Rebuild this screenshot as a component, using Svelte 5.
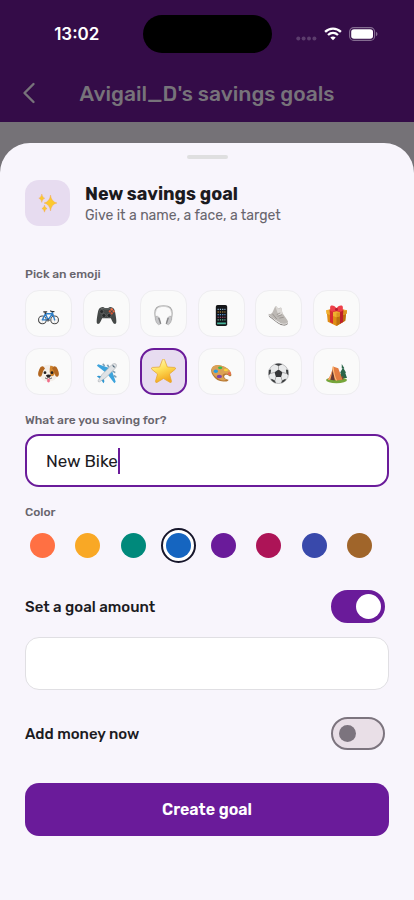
<script>
    const emojis = [
        "bike", "gamepad", "headphones", "phone", "shoe", "gift",
        "dog", "plane", "star", "palette", "football", "tent",
    ];
    const colors = [
        { name: "Orange", value: "#ff7043" },
        { name: "Amber", value: "#f9a825" },
        { name: "Teal", value: "#00897b" },
        { name: "Blue", value: "#1565c0" },
        { name: "Purple", value: "#6a1b9a" },
        { name: "Pink", value: "#ad1457" },
        { name: "Indigo", value: "#3949ab" },
        { name: "Brown", value: "#a0652a" },
    ];

    let emoji = "star";
    let color = "#1565c0";
    let goalName = "New Bike";
    let amount = "";
    let hasGoal = true;
    let addMoney = false;
</script>

<div class="screen">
    <header>
        <div class="status">
            <span class="time">13:02</span>
            <span class="island"></span>
            <span class="signals">
                <svg width="21" height="5" viewBox="0 0 21 5" fill="#5c3d6d">
                    <circle cx="2.3" cy="2.5" r="2" />
                    <circle cx="7.6" cy="2.5" r="2" />
                    <circle cx="13" cy="2.5" r="2" />
                    <circle cx="18.4" cy="2.5" r="2" />
                </svg>
                <svg width="18" height="14" viewBox="0 0 18 14" fill="none" stroke="#fff" stroke-width="2.3">
                    <path d="M1.1 4.9C5.6.6 12.4.6 16.9 4.9" />
                    <path d="M4 8c2.9-2.7 7.1-2.7 10 0" />
                    <path d="M6.3 10.5c1.6-1.4 3.8-1.4 5.4 0L9 13.3z" fill="#fff" stroke="none" />
                </svg>
                <svg width="29" height="14" viewBox="0 0 29 14">
                    <rect x=".6" y=".6" width="25" height="12.8" rx="4.2" fill="none" stroke="#846d91" stroke-width="1.1" />
                    <rect x="2.2" y="2.2" width="21.8" height="9.6" rx="2.8" fill="#fff" />
                    <path d="M27 4.8c2 .8 2 3.6 0 4.4z" fill="#846d91" />
                </svg>
            </span>
        </div>
        <div class="nav">
            <button class="back" aria-label="Back">
                <svg width="14" height="22" viewBox="0 0 14 22" fill="none" stroke="#77737a" stroke-width="2.4" stroke-linecap="round" stroke-linejoin="round">
                    <path d="M11.5 2 2.5 11l9 9" />
                </svg>
            </button>
            <h1>Avigail_D's savings goals</h1>
        </div>
    </header>

    <main class="sheet">
        <div class="handle"></div>

        <div class="intro">
            <div class="badge">
                <svg width="20" height="20" viewBox="0 0 20 20" fill="#fcc92f" stroke="#f2a65a" stroke-width=".4">
                    <path d="M12.5 2q.9 6.900 6.500 8-5.600 1.100-6.500 8-.9-6.900-6.500-8 5.600-1.100 6.500-8z" />
                    <path d="M3.800 1q.5 3.500 3 4.200-2.500.7-3 4.200-.5-3.500-3-4.200 2.500-.7 3-4.200z" />
                    <path d="M6.500 12q.4 3 2.600 3.600-2.200.6-2.600 3.600-.4-3-2.600-3.600 2.200-.6 2.600-3.600z" />
                </svg>
            </div>
            <div class="heading">
                <h2>New savings goal</h2>
                <p>Give it a name, a face, a target</p>
            </div>
        </div>

        <h3>Pick an emoji</h3>
        <div class="emojis">
            {#each emojis as name}
                <button
                    class="tile"
                    class:selected={emoji === name}
                    aria-label={name}
                    aria-pressed={emoji === name}
                    on:click={() => (emoji = name)}
                >
                    <svg viewBox="0 0 24 24">
                        {#if name === "bike"}
                            <g fill="none" stroke-linecap="round" stroke-linejoin="round">
                                <circle cx="5" cy="17" r="4.400" stroke="#444" stroke-width="1.200" />
                                <circle cx="19" cy="17" r="4.400" stroke="#444" stroke-width="1.200" />
                                <path d="M5 13v8M1 17h8M19 13v8M15 17h8" stroke="#bbb" stroke-width=".4" />
                                <path d="M5 17 8.500 10h8L11.500 17H5M8.500 10l3 7M19 17 16 7.500" stroke="#2f7fc8" stroke-width="1.600" />
                                <path d="M6.500 7.800h3.500M8.500 10l-.5-2.200M16 7.500l-1.700-.7M16 7.500h2.300" stroke="#333" stroke-width="1.300" />
                                <circle cx="11.500" cy="17.300" r="1.200" stroke="#444" />
                            </g>
                        {:else if name === "gamepad"}
                            <path d="M5 3q3-1.500 5 .3h4Q16 1.500 19 3q2 .5 3 6 1.500 8 1.200 11-.3 2-2.200 1.500-1.500-.5-4-6.500H7Q4.500 21 3 21.500 1.100 22 .8 20 .5 17 2 9 3 3.500 5 3z" fill="#444847" />
                            <path d="M5.500 4.200q3-1 4.500.3h4q1.500-1.300 4.500-.3" fill="none" stroke="#6c706f" />
                            <circle cx="6.500" cy="7.500" r="2.300" fill="#292c2c" stroke="#777" stroke-width=".6" />
                            <circle cx="9" cy="12" r="2.300" fill="#252828" stroke="#777" stroke-width=".6" />
                            <circle cx="15" cy="12" r="2.300" fill="#252828" stroke="#777" stroke-width=".6" />
                            <circle cx="18" cy="5" r="1.400" fill="#ff7043" />
                            <circle cx="15.800" cy="7.300" r="1.300" fill="#db5a3b" />
                            <circle cx="20.200" cy="7.300" r="1.300" fill="#ef6c42" />
                            <circle cx="18" cy="9.600" r="1.300" fill="#da5633" />
                        {:else if name === "headphones"}
                            <path d="M3.500 17C-.5 1.500 7 1.200 12 1.200S24.500 1.500 20.500 17" fill="none" stroke="#aaa" stroke-width="1.800" />
                            <path d="M3.500 16.500C.5 2.500 7.500 1.500 12 1.500S23.500 2.500 20.500 16.500" fill="none" stroke="#eee" stroke-width=".7" />
                            <path d="M3 13q2.500-1 4.500 2l1.500 6.500-2.500 1.200Q3.300 21 2.500 16zM21 13q-2.500-1-4.500 2L15 21.500l2.500 1.200q3.200-1.700 4-6.700z" fill="#c6c6c8" stroke="#999" stroke-width=".5" />
                            <path d="m6.500 14.500 2.300 7M17.500 14.500l-2.300 7" stroke="#858587" stroke-width="1.400" />
                        {:else if name === "phone"}
                            <rect x="5.500" y="0" width="13" height="24" rx="2" fill="#151719" />
                            <rect x="7" y="3" width="10" height="18" fill="#101318" />
                            <g stroke-width="1.400" stroke-dasharray="1.400 1.200">
                                <path d="M7.500 5h9" stroke="#91b8d3" />
                                <path d="M7.500 8h9" stroke="#dda23d" />
                                <path d="M7.500 11h9" stroke="#5d99d7" />
                                <path d="M7.500 14h9" stroke="#c35979" />
                                <path d="M7.500 17h9" stroke="#6ebaa0" />
                            </g>
                            <path d="M7 21h10" stroke="#47b59b" stroke-width="2" />
                        {:else if name === "shoe"}
                            <path d="M1 10q2 1.500 4-1.500L8 2q1.500-1.500 2.500.5.500 2 2.500 1 2-1.500 2.500.5.500 4 1.500 6l5 7q1.500 2 .5 4.500-1 1.500-4 1.500-3-1-6.500-4L1.500 13q-1.300-1.500-.5-3z" fill="#bdb9b5" />
                            <path d="M8.500 2q1-1 2 .5.500 2 2.500 1.500 2-1.500 2.500.5l1.200 6-4.700 1.500z" fill="#dcd9d6" />
                            <path d="M.8 11q5 4 8 7 5 4 9 4.500 4 0 5-2-.3 2.500-4 3-3.500.3-8-3L1.500 13.500z" fill="#77726f" />
                            <path d="M1 11.500q5 4 8 6.500 5 4 9 4 3 0 4.500-1.500" fill="none" stroke="#efeeec" stroke-width=".8" />
                            <path d="m10 11 4-2m-3 4 5-2m-3 4 5-1M5 10l5 6" fill="none" stroke="#918c89" stroke-width=".9" />
                        {:else if name === "gift"}
                            <path d="m1 9 11 3 11-3-1 9-10 6-10-5z" fill="#df8d15" />
                            <path d="m12 12 11-3-1 9-10 6z" fill="#bd7010" />
                            <path d="m0 6 12-3 12 3-.5 4L12 14 .5 10z" fill="#efb02f" />
                            <path d="m12 9 12-3-.5 4L12 14z" fill="#dc9420" />
                            <path d="m4 5.500 4 2v14l-3.500-2V10z" fill="#d72c32" />
                            <path d="m20 5.500-4 2v14l3.500-2V10z" fill="#bd202b" />
                            <path d="m4 5.500 8-2 8 2-4 2.500-4-1-4 1z" fill="#d72c32" />
                            <path d="M12 6Q6 9 5 6 4 1 6 .5 10 0 12 4q2-4 6-3.500 2 .5 1 5.500-1 3-7 0z" fill="#ed3f49" />
                            <circle cx="12" cy="5" r="1.700" fill="#b81c2d" />
                        {:else if name === "dog"}
                            <path d="M5 4q7-4 14 0l3 9q-1 8-10 8T2 13z" fill="#f3eee9" />
                            <path d="M14 3q5 0 6 6-1 6-4.500 6Q12 12 14 3z" fill="#cf842e" />
                            <path d="M6 4Q3 3 1.500 7-1 13 1 15q3 2 4-3 .5-3 3-6zM18 4q3-1 4.500 3 2.500 6 .5 8-3 2-4-3-.5-3-3-6z" fill="#b26620" />
                            <circle cx="8" cy="11" r="1.600" fill="#24201f" />
                            <circle cx="16" cy="11" r="1.600" fill="#24201f" />
                            <path d="M9 14q3-2 6 0l-1.500 2.500h-3z" fill="#252225" />
                            <path d="M8 17q2 2 4-.5 2 2.500 4 .5" fill="none" stroke="#4e4543" />
                            <path d="M10.500 18h3v3q-1.500 2.500-3 0z" fill="#f16c88" />
                        {:else if name === "plane"}
                            <path d="m1 3 1.500-1.500L16 6l2 2-4 5zM21 23l1.500-1.500L18 8l-2-2-5 4z" fill="#3ca3dc" />
                            <path d="m1 15.500 1.500-1 5 .5 1.500 1.500.5 5-1 1.500-3-4.500z" fill="#2c96d2" />
                            <path d="M22.800 1.200q1.500 1.500-.5 4.500L11 17l-7 4.500q-2 .5-1.500-1.500L7 13 18.300 1.700q3-2 4.500-.5z" fill="#dfe2e5" stroke="#9ba1a7" stroke-width=".6" />
                            <path d="m7 1 2-.5 1.500 3-1.500.5zM12 2.200l2-.5 1.500 3-1.500.500zM23 17l.5-2-3-1.500-.5 1.500zM21.800 12l.5-2-3-1.500-.5 1.500z" fill="#7f9eb3" />
                            <path d="m19 2.800 2.300 2.300" stroke="#405b6e" stroke-width="1.200" />
                        {:else if name === "star"}
                            <defs>
                                <linearGradient id="gold" x2=".4" y2="1">
                                    <stop stop-color="#fffad0" />
                                    <stop offset=".5" stop-color="#ffe15b" />
                                    <stop offset="1" stop-color="#f3a71e" />
                                </linearGradient>
                            </defs>
                            <path d="M12 0q.8 0 1.200 1.200l2.500 6.500 7 .4q1.700.5.500 1.800l-5.500 4.500 2 7q0 1.800-1.700 1L12 18.700l-6 3.700q-1.700.8-1.700-1l2-7L.8 9.900Q-.4 8.600 1.300 8.100l7-.4 2.500-6.500Q11.200 0 12 0z" fill="url(#gold)" stroke="#e5a42d" stroke-width=".7" />
                        {:else if name === "palette"}
                            <path d="M1 6Q4 1 12 3q8 2 11 9 1 4-2 3-4-3-6 0 0 3 5 4 0 2-4 2Q7 22 2 14-1 9 1 6z" fill="#b77832" />
                            <path d="M1 5.500Q4 1 12 3q8 2 11 8 0 3-2.500 2.500-4-3-7 0-1 3 4 5.500-3 2-8-.5-10-5-8.500-13z" fill="#dba156" />
                            <ellipse cx="5.500" cy="9.500" rx="2.500" ry="2" fill="#2a9fe0" />
                            <ellipse cx="10.500" cy="5.500" rx="2.500" ry="1.500" fill="#3cb94b" />
                            <ellipse cx="17" cy="8" rx="2.400" ry="1.500" fill="#f8d439" />
                            <ellipse cx="21" cy="12" rx="1.800" ry="1.500" fill="#ed6555" />
                            <ellipse cx="9.500" cy="15.500" rx="3" ry="2" fill="#7e42ac" />
                        {:else if name === "football"}
                            <circle cx="12" cy="12" r="11.500" fill="#e9eaeb" stroke="#8a8b8d" stroke-width=".6" />
                            <path d="m12 7.500 4.500 3.200L15 16H9l-1.500-5.300z" fill="#353638" />
                            <path d="m7.500 1.400 4.500 2 4.500-2Q12-.5 7.500 1.400zM1 8l-.2 6 2.200-2 .5-4.500zM23 8l.2 6-2.200-2-.5-4.500zM3.500 19.500q2.500 3 5.500 3.600L8 20l-4-2zM20.500 19.500q-2.500 3-5.500 3.600l1-3.100 4-2z" fill="#3e4042" />
                            <path d="M12 3.400v4M3 12l4.500-1.300M21 12l-4.500-1.300M9 16l-1 4M15 16l1 4" stroke="#999" stroke-width=".9" />
                        {:else}
                            <ellipse cx="12" cy="19.500" rx="12" ry="3.500" fill="#76a53a" />
                            <path d="m18 1 3 5h-1l3 5h-1l2 6h-9l2-6h-1l3-5h-1z" fill="#2b6649" />
                            <path d="M19 15v4" stroke="#754a30" stroke-width="1.500" />
                            <path d="m8 4 6 2 5 13-7 1-4-2-6 1Q6 14 8 4z" fill="#e37c41" />
                            <path d="M8 4q-1 9-6 15h3l3-5z" fill="#f7a765" />
                            <path d="M8 7 5 19l5 1z" fill="#643a35" />
                            <path d="M8 4q1 11 4 16" fill="none" stroke="#ffc07d" stroke-width="1.200" />
                        {/if}
                    </svg>
                </button>
            {/each}
        </div>

        <label class="caption" for="goal-name">What are you saving for?</label>
        <div class="field focused">
            <input id="goal-name" class="name" type="text" size="8" bind:value={goalName} />
            <span class="caret"></span>
        </div>

        <h3>Color</h3>
        <div class="colors">
            {#each colors as { name, value }}
                <button
                    class="swatch"
                    class:picked={color === value}
                    aria-label={name}
                    aria-pressed={color === value}
                    on:click={() => (color = value)}
                >
                    <span style="background: {value}"></span>
                </button>
            {/each}
        </div>

        <div class="option">
            <label for="has-goal">Set a goal amount</label>
            <input id="has-goal" class="switch" type="checkbox" role="switch" bind:checked={hasGoal} />
        </div>
        {#if hasGoal}
            <div class="field">
                <input class="amount" type="text" inputmode="decimal" aria-label="Goal amount" bind:value={amount} />
            </div>
        {/if}
        <div class="option money">
            <label for="add-money">Add money now</label>
            <input id="add-money" class="switch" type="checkbox" role="switch" bind:checked={addMoney} />
        </div>

        <button class="create">Create goal</button>
    </main>
</div>

<style>
    :global(body) {
        margin: 0;
        background: #757277;
    }

    .screen {
        display: flex;
        flex-direction: column;
        min-height: 100vh;
        font-family: Rubik, Roboto, "Liberation Sans", sans-serif;
        color: #1c1b1f;
    }

    button,
    input {
        margin: 0;
        padding: 0;
        border: none;
        font: inherit;
        color: inherit;
        box-sizing: border-box;
    }

    button {
        cursor: pointer;
    }

    svg {
        display: block;
    }

    h1,
    h2,
    h3,
    p {
        margin: 0;
    }

    header {
        box-sizing: border-box;
        height: 122px;
        background: #340c48;
    }

    .status {
        display: grid;
        grid-template-columns: 1fr 129px 1fr;
        align-items: center;
        padding-top: 15px;
    }

    .time {
        padding-left: 11px;
        text-align: center;
        color: #fff;
        font-family: Inter, sans-serif;
        font-size: 17px;
        font-weight: 600;
    }

    .island {
        height: 38px;
        border-radius: 19px;
        background: #000;
    }

    .signals {
        display: flex;
        align-items: center;
        justify-content: flex-end;
        gap: 7px;
        padding-right: 36px;
    }

    .signals svg:first-child {
        margin-top: 9px;
    }

    .nav {
        display: grid;
        grid-template-columns: 36px 1fr 36px;
        align-items: center;
        padding: 0 22px;
        height: 80px;
    }

    .back {
        display: flex;
        background: none;
    }

    h1 {
        color: #77737a;
        font-size: 21px;
        font-weight: 500;
        text-align: center;
        white-space: nowrap;
    }

    .sheet {
        flex: 1;
        display: flex;
        flex-direction: column;
        margin-top: 21px;
        padding: 12px 25px 64px;
        border-radius: 30px 30px 0 0;
        background: #f8f5fc;
    }

    .handle {
        align-self: center;
        width: 41px;
        height: 4px;
        border-radius: 2px;
        background: #dfdfe0;
    }

    .intro {
        display: flex;
        align-items: center;
        gap: 15px;
        margin: 21px 0 39px;
    }

    .badge {
        display: grid;
        place-items: center;
        width: 45px;
        height: 46px;
        border-radius: 14px;
        background: #e7dcf0;
    }

    .heading {
        padding-top: 2px;
    }

    h2 {
        font-size: 18px;
        font-weight: 700;
        line-height: 24px;
    }

    p {
        color: #68656d;
        font-size: 14px;
        line-height: 20px;
    }

    h3,
    .caption {
        color: #68656d;
        font-size: 12px;
        font-weight: 500;
        line-height: 18px;
    }

    .emojis {
        display: grid;
        grid-template-columns: repeat(6, 47px);
        justify-content: space-between;
        gap: 11px 0;
        max-width: 335px;
        margin: 7px 0 16px;
    }

    .tile {
        display: grid;
        place-items: center;
        height: 47px;
        padding-top: 4px;
        border: 1px solid #eeedf0;
        border-radius: 14px;
        background: #fafafa;
    }

    .tile svg {
        width: 21px;
        height: 21px;
    }

    .tile.selected {
        padding-top: 0;
        border: 2px solid #6a1b9a;
        background: #e7dcf0;
    }

    .tile.selected svg {
        width: 25px;
        height: 25px;
    }

    .field {
        display: flex;
        align-items: center;
        box-sizing: border-box;
        height: 53px;
        padding: 0 20px;
        border: 1px solid #e0dfe3;
        border-radius: 14px;
        background: #fff;
        font-size: 17px;
    }

    .field.focused {
        margin: 5px 0 16px;
        padding: 0 19px;
        border: 2px solid #6a1b9a;
    }

    .field input {
        outline: none;
        background: none;
    }

    .name {
        field-sizing: content;
        max-width: 100%;
    }

    .amount {
        width: 100%;
    }

    .caret {
        width: 2px;
        height: 26px;
        background: #6a1b9a;
    }

    .colors {
        display: flex;
        justify-content: space-between;
        max-width: 352px;
        margin: 7px 0 27px;
    }

    .swatch {
        display: grid;
        place-items: center;
        width: 35px;
        height: 35px;
        border: 2px solid transparent;
        border-radius: 50%;
        background: none;
    }

    .swatch span {
        width: 25px;
        height: 25px;
        border-radius: 50%;
    }

    .swatch.picked {
        border-color: #17162b;
        background: #fff;
    }

    .option {
        display: flex;
        align-items: center;
        justify-content: space-between;
        margin-bottom: 14px;
        padding-right: 4px;
        font-size: 15px;
        font-weight: 500;
    }

    .option.money {
        margin: 27px 0 33px;
    }

    .switch {
        appearance: none;
        display: flex;
        align-items: center;
        width: 54px;
        height: 33px;
        padding: 0 6px;
        border: 2px solid #7c747e;
        border-radius: 17px;
        background: #e9dfe7;
        cursor: pointer;
    }

    .switch::before {
        content: "";
        width: 17px;
        height: 17px;
        border-radius: 50%;
        background: #7c747e;
    }

    .switch:checked {
        justify-content: flex-end;
        padding: 0 2px;
        border-color: #6a1b9a;
        background: #6a1b9a;
    }

    .switch:checked::before {
        width: 25px;
        height: 25px;
        background: #fff;
    }

    .create {
        height: 53px;
        border-radius: 14px;
        background: #6a1b9a;
        color: #fff;
        font-size: 16px;
        font-weight: 600;
    }
</style>
